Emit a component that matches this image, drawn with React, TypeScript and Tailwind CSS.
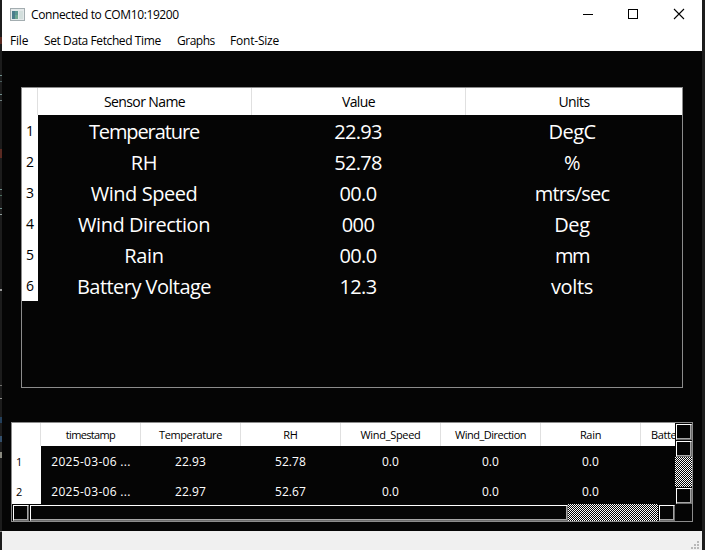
import type { ReactNode } from "react";

type Cell = { text: string; track: string };

const sensors: Cell[][] = [
  [
    { text: "Temperature", track: "tracking-[-1.1px]" },
    { text: "22.93", track: "tracking-[-0.7px]" },
    { text: "DegC", track: "tracking-[-0.5px]" },
  ],
  [
    { text: "RH", track: "tracking-[-0.3px]" },
    { text: "52.78", track: "tracking-[-0.7px]" },
    { text: "%", track: "tracking-[-0.3px]" },
  ],
  [
    { text: "Wind Speed", track: "tracking-[-0.45px]" },
    { text: "00.0", track: "tracking-[-0.7px]" },
    { text: "mtrs/sec", track: "tracking-[-0.8px]" },
  ],
  [
    { text: "Wind Direction", track: "tracking-[-0.45px]" },
    { text: "000", track: "tracking-[-0.6px]" },
    { text: "Deg", track: "tracking-[-0.3px]" },
  ],
  [
    { text: "Rain", track: "tracking-[-0.3px]" },
    { text: "00.0", track: "tracking-[-0.7px]" },
    { text: "mm", track: "tracking-[-1.5px]" },
  ],
  [
    { text: "Battery Voltage", track: "tracking-[-0.55px]" },
    { text: "12.3", track: "tracking-[-0.7px]" },
    { text: "volts", track: "tracking-[-0.3px]" },
  ],
];

const logColumns: Cell[] = [
  { text: "timestamp", track: "tracking-[-0.65px]" },
  { text: "Temperature", track: "tracking-[-0.4px]" },
  { text: "RH", track: "tracking-[-0.2px]" },
  { text: "Wind_Speed", track: "tracking-[-0.3px]" },
  { text: "Wind_Direction", track: "tracking-[-0.5px]" },
  { text: "Rain", track: "tracking-[-0.3px]" },
];
const logRows = [
  ["2025-03-06 ...", "22.93", "52.78", "0.0", "0.0", "0.0"],
  ["2025-03-06 ...", "22.97", "52.67", "0.0", "0.0", "0.0"],
];

const specks = [
  { top: 37, height: 7, color: "#5a2a22" },
  { top: 75, height: 1, color: "#6f8f8c" },
  { top: 81, height: 1, color: "#4c5f60" },
  { top: 94, height: 1, color: "#6f8f8c" },
  { top: 100, height: 1, color: "#6f7f80" },
  { top: 149, height: 9, color: "#5a2a22" },
  { top: 189, height: 1, color: "#6f8f8c" },
  { top: 195, height: 1, color: "#4c6f60" },
  { top: 208, height: 1, color: "#6f8f8c" },
  { top: 214, height: 1, color: "#8f9f9c" },
  { top: 289, height: 2, color: "#9a9a9a" },
  { top: 385, height: 1, color: "#6f6f6c" },
  { top: 398, height: 1, color: "#8f8f8c" },
  { top: 417, height: 6, color: "#24405c" },
  { top: 436, height: 6, color: "#34506c" },
  { top: 452, height: 6, color: "#8a8a80" },
  { top: 531, height: 1, color: "#8f8f8c" },
];

function EdgeStrip() {
  return (
    <div className="relative w-[2px] shrink-0 bg-[#1c1c1c]">
      {specks.map((s) => (
        <div
          key={s.top}
          className="absolute left-0 w-full"
          style={{ top: s.top, height: s.height, background: s.color }}
        />
      ))}
    </div>
  );
}

function Bevel({ className, children }: { className: string; children?: ReactNode }) {
  return (
    <div className={`flex shrink-0 items-center justify-center border border-t-white border-l-white border-r-[#6c6c6c] border-b-[#6c6c6c] bg-[#050505] shadow-[inset_-1px_-1px_0_#a6a6a6] ${className}`}>
      {children}
    </div>
  );
}

function Dither({ id, className }: { id: string; className: string }) {
  return (
    <svg className={className} shapeRendering="crispEdges">
      <defs>
        <pattern id={id} width="2" height="2" patternUnits="userSpaceOnUse">
          <rect width="2" height="2" fill="#050505" />
          <rect width="1" height="1" fill="#fff" />
          <rect x="1" y="1" width="1" height="1" fill="#fff" />
        </pattern>
      </defs>
      <rect width="100%" height="100%" fill={`url(#${id})`} />
    </svg>
  );
}

function TitleBar() {
  return (
    <div className="flex h-[30px] shrink-0 items-center pl-2">
      <svg width="15" height="13" viewBox="0 0 15 13" shapeRendering="crispEdges" className="mt-[-2px]">
        <rect width="15" height="13" fill="#a3adb0" />
        <rect x="1" y="1" width="13" height="11" fill="#e4e9ea" />
        <rect x="2" y="3" width="6" height="8" fill="#5b9691" />
        <rect x="2" y="3" width="3" height="8" fill="#4b7d8c" />
        <rect x="5" y="7" width="3" height="4" fill="#6fa791" />
        <rect x="9" y="3" width="4" height="8" fill="#d3dfdd" />
      </svg>
      <span className="ml-[6px] text-[12px] tracking-[-0.38px]">Connected to COM10:19200</span>
      <svg width="140" height="30" viewBox="0 0 140 30" className="ml-auto" fill="none" stroke="#000" shapeRendering="crispEdges">
        <path d="M21 14.5h10" />
        <path d="M66.5 9.5h9v9h-9z" />
        <path d="M112 9l10 10M122 9l-10 10" shapeRendering="auto" strokeWidth="1.1" />
      </svg>
    </div>
  );
}

function SensorTable() {
  return (
    <div className="mt-9 ml-[19px] flex h-[301px] w-[662px] shrink-0 flex-col border border-[#8c8c8c]">
      <div className="flex h-[27px] shrink-0 bg-white text-[14px] text-black">
        <div className="w-4 border-r border-[#e0e0e0]" />
        <div className="flex w-[214px] items-center justify-center border-r border-[#e0e0e0] pt-px tracking-[-0.6px]">Sensor Name</div>
        <div className="flex w-[214px] items-center justify-center border-r border-[#e0e0e0] pt-px tracking-[-0.6px]">Value</div>
        <div className="flex w-[216px] items-center justify-center pt-px tracking-[-0.6px]">Units</div>
      </div>
      {sensors.map((row, i) => (
        <div key={i} className="flex h-[31px] shrink-0">
          <div className="flex w-4 items-center justify-center bg-white pt-px text-[14px] text-black">{i + 1}</div>
          {row.map((cell, c) => (
            <div key={c} className={`flex w-[214px] items-center justify-center pt-[3px] pr-[2px] text-[20px] text-white ${cell.track}`}>
              {cell.text}
            </div>
          ))}
        </div>
      ))}
    </div>
  );
}

function LogTable() {
  return (
    <div className="mt-[34px] ml-[9px] flex h-[100px] w-[682px] shrink-0 flex-col border border-[#8c8c8c]">
      <div className="flex h-[81px] shrink-0">
        <div className="flex w-[663px] flex-col overflow-hidden">
          <div className="flex h-[23px] shrink-0 bg-white text-[11px] text-black">
            <div className="w-[29px] shrink-0 border-r border-[#e0e0e0]" />
            {logColumns.map((col) => (
              <div key={col.text} className={`flex w-[100px] shrink-0 items-center justify-center border-r border-[#e0e0e0] pb-px ${col.track}`}>
                {col.text}
              </div>
            ))}
            <div className="flex items-center pb-px pl-[10px] tracking-[-0.4px] whitespace-nowrap">Batte</div>
          </div>
          {logRows.map((row, i) => (
            <div key={i} className="flex h-[30px] shrink-0">
              <div className="flex w-[29px] shrink-0 items-center bg-white pl-1 text-[11px] text-black">{i + 1}</div>
              {row.map((cell, c) => (
                <div
                  key={c}
                  className={`flex w-[100px] shrink-0 items-center justify-center pt-[2px] text-[12px] text-white ${c === 0 ? "tracking-[0.3px]" : "pr-px tracking-[0.1px]"}`}
                >
                  {cell}
                </div>
              ))}
            </div>
          ))}
        </div>
        <div className="flex w-[17px] flex-col bg-[#050505]">
          <Bevel className="mt-px ml-px h-4 w-4" />
          <Bevel className="mt-px ml-px h-4 w-4" />
          <Dither id="dither-v" className="block h-[30px] w-[17px]" />
          <Bevel className="mt-px ml-px h-4 w-4" />
        </div>
      </div>
      <div className="flex h-[17px] shrink-0 bg-[#050505]">
        <Bevel className="mt-px ml-px h-4 w-4" />
        <Bevel className="mt-px ml-px h-4 w-[538px]" />
        <Dither id="dither-h" className="block h-[17px] w-[90px]" />
        <Bevel className="mt-px ml-px h-4 w-4" />
      </div>
    </div>
  );
}

export default function App() {
  return (
    <div className="flex h-[550px] w-[705px] overflow-hidden bg-[#1c1c1c] font-['Open_Sans','Noto_Sans',sans-serif] leading-none">
      <EdgeStrip />
      <div className="flex w-[700px] shrink-0 flex-col bg-white text-black">
        <TitleBar />
        <div className="flex h-[21px] shrink-0 items-center pt-px pl-2 text-[12px] whitespace-nowrap">
          <span className="w-[34px] tracking-[-0.2px]">File</span>
          <span className="w-[133px] tracking-[-0.4px]">Set Data Fetched Time</span>
          <span className="w-[53px] tracking-[-0.5px]">Graphs</span>
          <span className="tracking-[-0.2px]">Font-Size</span>
        </div>
        <div className="flex h-[480px] shrink-0 flex-col bg-[#050505]">
          <SensorTable />
          <LogTable />
        </div>
        <div className="flex h-[19px] shrink-0 items-end justify-end bg-[#f0f0f0] pr-[3px] pb-px">
          <svg width="8" height="8" fill="#b8b8b8" shapeRendering="crispEdges">
            <path d="M6 0h2v2h-2zM3 3h2v2h-2zM6 3h2v2h-2zM0 6h2v2h-2zM3 6h2v2h-2zM6 6h2v2h-2z" />
          </svg>
        </div>
      </div>
    </div>
  );
}
